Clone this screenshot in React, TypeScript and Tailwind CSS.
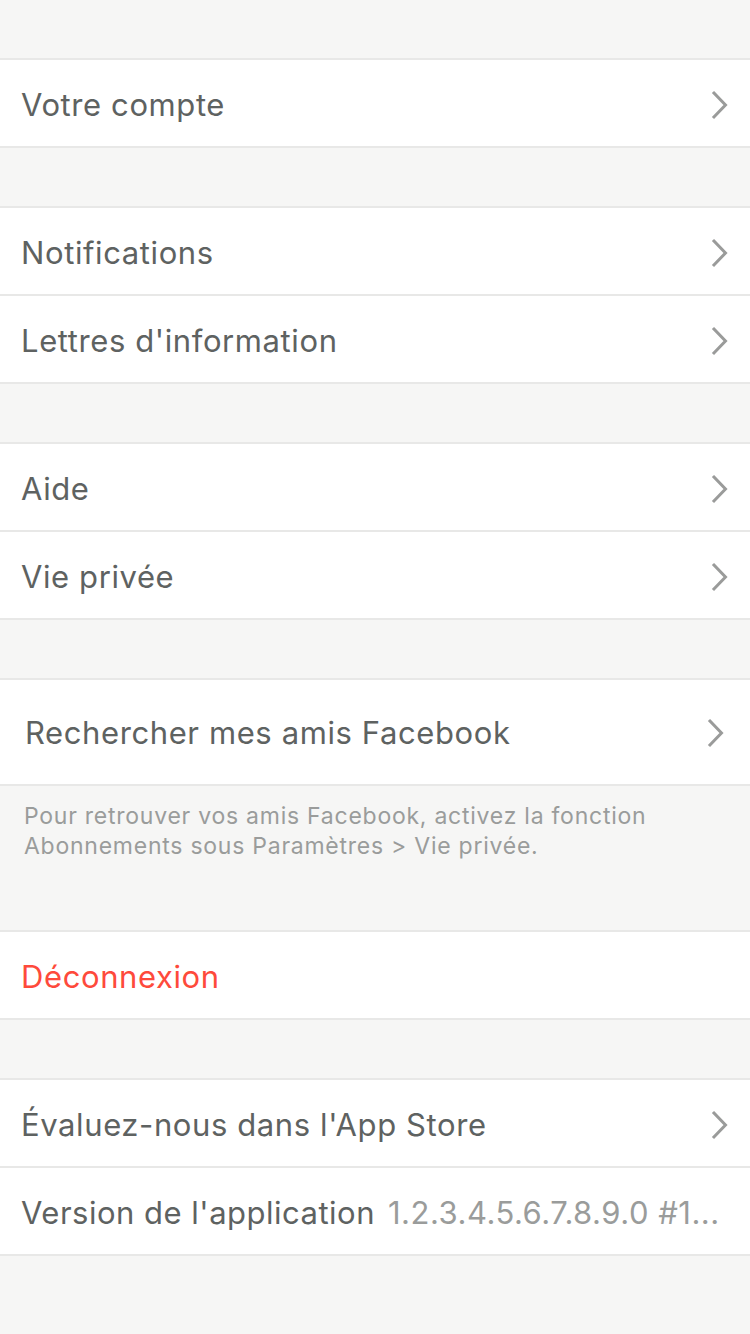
import React from "react";

const Chevron = ({ className = "" }: { className?: string }) => (
  <svg width="18" height="30" viewBox="0 0 18 30" className={className} fill="none">
    <path d="M3 3 L14.5 15 L3 27" stroke="#9a9b9a" strokeWidth="3" strokeLinecap="square" strokeLinejoin="miter" />
  </svg>
);

const Row = ({ label, chevron = true, last = false }: { label: string; chevron?: boolean; last?: boolean }) => (
  <div className={`flex items-center bg-white pl-[21px] pr-[21px] pt-[4px] ${last ? "h-[86px]" : "h-[88px] border-b-2 border-[#e8e8e7]"}`}>
    <span className="text-[31px] tracking-[0.6px] text-[#5e6261] whitespace-nowrap">{label}</span>
    <div className="flex-1" />
    {chevron && <Chevron />}
  </div>
);

const Group = ({ children }: { children: React.ReactNode }) => (
  <div className="border-t-2 border-b-2 border-[#e8e8e7] bg-white">{children}</div>
);

export default function App() {
  return (
    <div className="w-[750px] h-[1334px] bg-[#f6f6f5] overflow-hidden" style={{ fontFamily: "Inter, 'Noto Sans', sans-serif" }}>
      <div className="h-[58px]" />
      <Group>
        <Row label="Votre compte" last />
      </Group>
      <div className="h-[58px]" />
      <Group>
        <Row label="Notifications" />
        <Row label="Lettres d'information" last />
      </Group>
      <div className="h-[58px]" />
      <Group>
        <Row label="Aide" />
        <Row label="Vie privée" last />
      </Group>
      <div className="h-[58px]" />
      <Group>
        <div className="h-[104px] flex items-center bg-white pl-[25px] pr-[25px] pt-[2px]">
          <span className="text-[31px] tracking-[0.6px] text-[#5e6261] whitespace-nowrap">Rechercher mes amis Facebook</span>
          <div className="flex-1" />
          <Chevron />
        </div>
      </Group>
      <div className="h-[144px] pl-[24px] pt-[15px] text-[23px] leading-[30px] tracking-[0.75px] text-[#9a9c9b]">
        <div>Pour retrouver vos amis Facebook, activez la fonction</div>
        <div>Abonnements sous Paramètres &gt; Vie privée.</div>
      </div>
      <Group>
        <div className="h-[86px] flex items-center bg-white pl-[21px] pt-[4px]">
          <span className="text-[31px] tracking-[0.6px] text-[#fe4a3b]">Déconnexion</span>
        </div>
      </Group>
      <div className="h-[58px]" />
      <Group>
        <Row label="Évaluez-nous dans l'App Store" />
        <div className="h-[86px] flex items-center bg-white pl-[21px] pr-[21px] pt-[4px]">
          <span className="text-[31px] tracking-[0.5px] text-[#5e6261] whitespace-nowrap">Version de l'application</span>
          <span className="ml-[13px] text-[31px] tracking-[0.5px] text-[#9a9c9b] whitespace-nowrap">1.2.3.4.5.6.7.8.9.0 #1...</span>
        </div>
      </Group>
    </div>
  );
}
